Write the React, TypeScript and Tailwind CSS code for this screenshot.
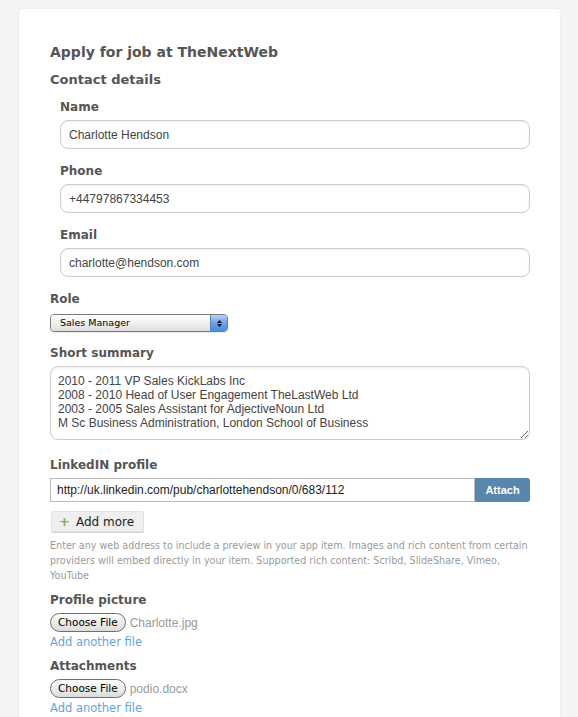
import React from 'react';

const heading = "font-['DejaVu_Sans',sans-serif] font-bold text-[#555]";
const field = "font-['Liberation_Sans',Arial,sans-serif] text-[12px]";

function Label({ children, className = '' }: { children: React.ReactNode; className?: string }) {
  return <div className={`${heading} text-[12px] leading-[16px] ${className}`}>{children}</div>;
}

function TextInput({ value }: { value: string }) {
  return (
    <input
      type="text"
      defaultValue={value}
      className={`${field} mt-[5px] block h-[29px] w-full rounded-[8px] border border-[#cfcfcf] bg-white px-[8px] text-[#444] shadow-[inset_0_1px_2px_rgba(0,0,0,0.08)] outline-none`}
    />
  );
}

function FileRow({ name }: { name: string }) {
  return (
    <div className="mt-[5px] flex h-[19px] items-center gap-[4px]">
      <button className="flex h-[19px] items-center rounded-full border border-[#6f6f6f] bg-gradient-to-b from-white to-[#dcdcdc] px-[7px] font-['DejaVu_Sans',sans-serif] text-[10.5px] text-black">
        Choose File
      </button>
      <span className={`${field} text-[#999]`}>{name}</span>
    </div>
  );
}

function AddFile() {
  return (
    <div className="mt-[2px] font-['DejaVu_Sans',sans-serif] text-[11.5px] leading-[16px] text-[#64a3e3]">
      Add another file
    </div>
  );
}

export default function App() {
  return (
    <div className="min-h-[717px] overflow-hidden bg-[#f4f4f4] pt-[9px]">
      <div className="ml-[19px] w-[541px] rounded-[4px] bg-white pb-[20px] pl-[31px] pr-[30px] pt-[34px] shadow-[0_0_3px_rgba(0,0,0,0.06)]">
        <h1 className={`${heading} text-[14px] leading-[18px]`}>Apply for job at TheNextWeb</h1>
        <h2 className={`${heading} mt-[10px] text-[13px] leading-[18px]`}>Contact details</h2>

        <div className="pl-[10px]">
          <Label className="mt-[10px]">Name</Label>
          <TextInput value="Charlotte Hendson" />
          <Label className="mt-[14px]">Phone</Label>
          <TextInput value="+44797867334453" />
          <Label className="mt-[14px]">Email</Label>
          <TextInput value="charlotte@hendson.com" />
        </div>

        <Label className="mt-[14px]">Role</Label>
        <div className="mt-[7px] flex h-[18px] w-[178px] overflow-hidden rounded-[4px] border border-[#7a7a7a] shadow-[0_1px_0_rgba(0,0,0,0.08)]">
          <div className="flex flex-1 items-center bg-gradient-to-b from-white via-[#f1f1f1] to-[#dedede] pl-[9px] font-['DejaVu_Sans',sans-serif] text-[9.5px] text-black">
            Sales Manager
          </div>
          <div className="flex w-[17px] flex-col items-center justify-center gap-[1px] border-l border-[#5b7fb0] bg-gradient-to-b from-[#b6d2f5] via-[#6ea2ea] to-[#4d8ae0]">
            <svg width="5" height="3" viewBox="0 0 5 3"><path d="M2.5 0L5 3H0z" fill="#111" /></svg>
            <svg width="5" height="3" viewBox="0 0 5 3"><path d="M0 0h5L2.5 3z" fill="#111" /></svg>
          </div>
        </div>

        <Label className="mt-[13px]">Short summary</Label>
        <textarea
          defaultValue={
            '2010 - 2011 VP Sales KickLabs Inc\n2008 - 2010 Head of User Engagement TheLastWeb Ltd\n2003 - 2005 Sales Assistant for AdjectiveNoun Ltd\nM Sc Business Administration, London School of Business'
          }
          className={`${field} mt-[5px] block h-[74px] w-full rounded-[8px] border border-[#cfcfcf] px-[7px] pt-[7px] leading-[14px] text-[#444] shadow-[inset_0_1px_2px_rgba(0,0,0,0.08)] outline-none`}
        />

        <Label className="mt-[17px]">LinkedIN profile</Label>
        <div className="mt-[5px] flex h-[24px]">
          <input
            type="text"
            defaultValue="http://uk.linkedin.com/pub/charlottehendson/0/683/112"
            className={`${field} h-full flex-1 border border-[#bcbcbc] px-[6px] text-[#222] outline-none`}
          />
          <button className="h-full w-[55px] rounded-r-[3px] bg-[#5886ad] font-['Liberation_Sans',Arial,sans-serif] text-[11px] font-bold text-white">
            Attach
          </button>
        </div>

        <button className="mt-[9px] ml-[1px] flex h-[21px] items-center gap-[6px] rounded-[2px] border border-[#e2e2e2] bg-[#efefef] pl-[7px] pr-[9px] font-['DejaVu_Sans',sans-serif] text-[12px] text-[#222] shadow-[0_1px_0_#d2d2d2]">
          <span className="text-[13px] font-bold leading-none text-[#7cb342]">+</span>
          Add more
        </button>

        <p className="mt-[6px] font-['DejaVu_Sans',sans-serif] text-[9.6px] leading-[15px] text-[#9a9a9a]">
          Enter any web address to include a preview in your app item. Images and rich content from certain providers will embed directly in your item. Supported rich content: Scribd, SlideShare, Vimeo, YouTube
        </p>

        <Label className="mt-[9px]">Profile picture</Label>
        <FileRow name="Charlotte.jpg" />
        <AddFile />

        <Label className="mt-[8px]">Attachments</Label>
        <FileRow name="podio.docx" />
        <AddFile />
      </div>
    </div>
  );
}
